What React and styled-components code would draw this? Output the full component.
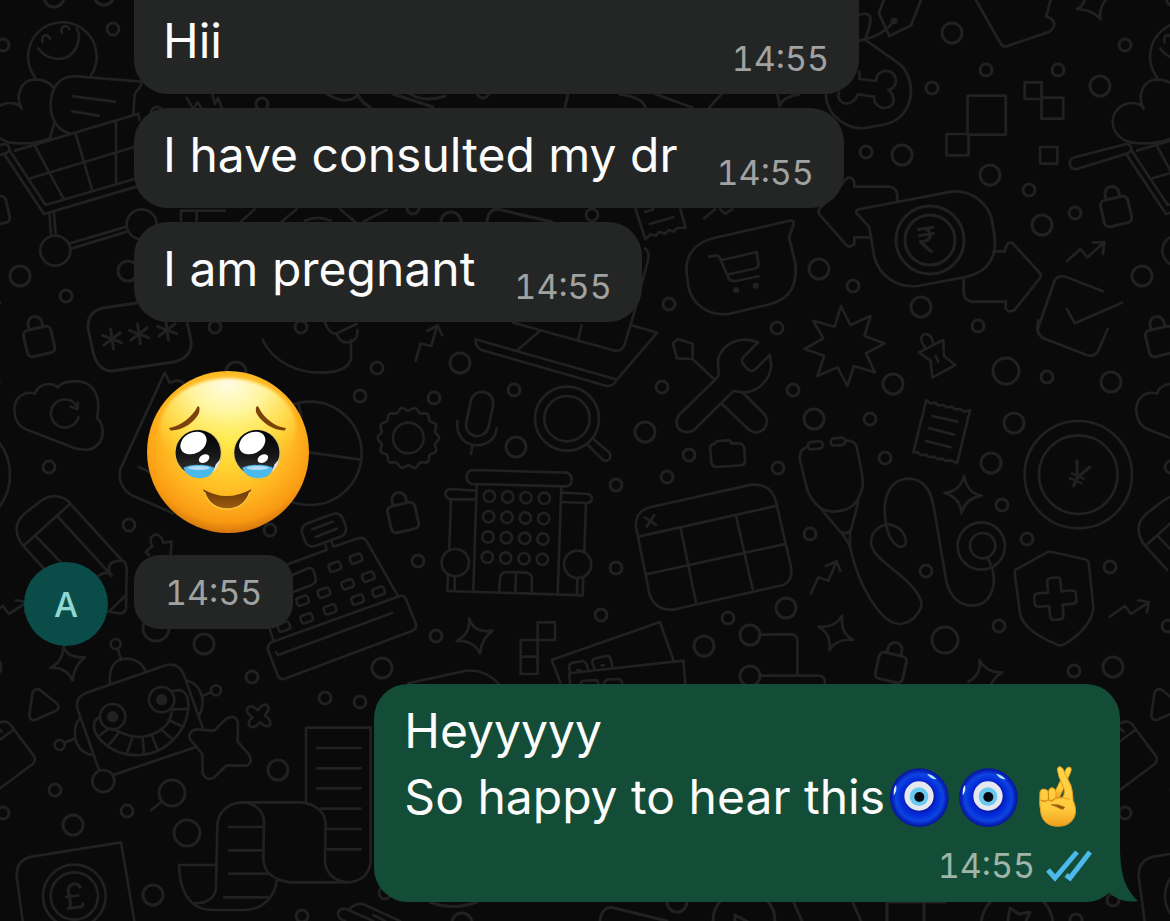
import React from 'react';
import styled, { createGlobalStyle } from 'styled-components';

const GlobalStyle = createGlobalStyle`
  * {
    box-sizing: border-box;
  }

  body {
    margin: 0;
    background-color: #0a0a0a;
    font-family: Inter, 'Liberation Sans', sans-serif;
  }
`;

const Page = styled.div`
  position: relative;
  min-height: 100vh;
  overflow: hidden;
`;

const WallpaperSvg = styled.svg`
  position: absolute;
  top: 0;
  left: 0;
  width: 100%;
  height: 100%;
  fill: none;
  stroke: #212121;
  stroke-width: 3;
  stroke-linecap: round;
  stroke-linejoin: round;
`;

const Section = styled.g`
  stroke-width: 8;
`;

const Coin = styled.text`
  fill: #212121;
  stroke: none;
  text-anchor: middle;
  font-weight: 400;
  font-size: 36px;
`;

const Dot = styled.circle`
  fill: #212121;
  stroke: none;
`;

const Conversation = styled.main`
  position: relative;
  display: flex;
  flex-direction: column;
  gap: 38px;
  padding: 0 50px 19px 24px;
`;

const ReceivedGroup = styled.section`
  display: flex;
  align-items: flex-end;
  gap: 26px;
`;

const Avatar = styled.div`
  display: flex;
  align-items: center;
  justify-content: center;
  flex: none;
  width: 84px;
  height: 84px;
  border-radius: 50%;
  background-color: #0a4d48;
  color: #90d8d3;
  font-size: 34px;
  font-weight: 500;
`;

const MessageList = styled.div`
  display: flex;
  flex-direction: column;
  align-items: flex-start;
  gap: 14px;
  padding-bottom: 17px;
`;

const Bubble = styled.article`
  position: relative;
  display: flex;
  align-items: flex-end;
  justify-content: space-between;
  gap: 39px;
  padding: 14px 30px 13px 29px;
  border-radius: 34px;
  background-color: #242626;
  color: #fcfcfc;
`;

const ContinuedBubble = styled(Bubble)`
  min-width: 725px;
  padding-top: 8px;
  border-top-left-radius: 0;
  border-top-right-radius: 0;
`;

const TimeBubble = styled(Bubble)`
  padding: 16px 31px 14px;
  border-radius: 26px;
`;

const SentBubble = styled(Bubble)`
  flex-direction: column;
  align-self: flex-end;
  gap: 7px;
  padding: 14px 28px 14px 30px;
  background-color: #144d37;
`;

const Text = styled.p`
  margin: 0;
  padding-bottom: 7px;
  font-size: 48px;
  line-height: 66px;
`;

const Line = styled.span`
  display: flex;
  align-items: center;
`;

const Time = styled.time`
  color: ${(props) => (props.$sent ? '#9fb5aa' : '#a1a2a2')};
  font-size: 34px;
  font-variant-numeric: tabular-nums;
  line-height: 44px;
`;

const Status = styled.div`
  display: flex;
  align-items: center;
  gap: 11px;
`;

const TickIcon = styled.svg`
  width: 46px;
  height: 32px;
  fill: none;
  stroke: #4cb9ea;
  stroke-width: 5;
`;

const TailShape = styled.svg`
  position: absolute;
  right: -18px;
  bottom: 0;
  width: 38px;
  height: 52px;
  fill: #144d37;
`;

const BigEmoji = styled.svg`
  width: 162px;
  height: 162px;
  margin: 35px 13px 8px;
`;

const InlineEmoji = styled.svg`
  flex: none;
  width: 59px;
  height: 62px;
  margin: 0 5px;
`;

const smallDots = [
  [113, 29], [3, 45], [262, 104], [157, 113], [66, 296], [215, 327], [301, 327],
  [377, 368], [360, 396], [49, 467], [129, 525], [270, 530], [252, 677], [325, 698],
  [360, 702], [55, 790], [127, 811], [3, 813], [302, 916], [385, 893], [434, 398],
  [514, 390], [616, 485], [616, 568], [667, 477], [689, 455], [662, 387], [777, 328],
  [778, 468], [793, 390], [418, 561], [436, 636], [601, 615], [728, 618], [978, 326],
  [1047, 377], [870, 419], [885, 458], [810, 534], [1002, 505], [1027, 539],
  [926, 571], [1110, 567], [999, 626], [46, 626], [1074, 671], [986, 70], [1058, 70],
  [932, 88], [866, 152], [1029, 190], [1075, 213], [853, 286], [669, 304],
  [1113, 900], [1076, 920], [483, 92], [413, 208], [592, 215],
];

const mediumDots = [
  [54, -3], [104, -5], [20, 276], [128, 271], [236, 372], [204, 644], [382, 668],
  [278, 770], [73, 825], [153, 895], [460, 363], [516, 447], [645, 432], [704, 646],
  [750, 635], [750, 676], [786, 608], [893, 384], [1111, 382], [814, 419],
  [1014, 423], [991, 463], [1113, 667], [952, 33], [1100, 86], [902, 155],
  [990, 175], [1042, 225], [819, 269], [921, 307], [451, 222], [462, 923], [677, 902],
];

const largeDots = [[156, 628], [172, 793], [187, 833], [1006, 371], [945, 640]];

const registerKeys = [
  [1005, 680], [1068, 656], [908, 782], [972, 758], [1043, 733], [1105, 710],
  [852, 860], [920, 835], [990, 808], [1073, 779], [1136, 755],
];

const gearPath = () => {
  const points = [];
  for (let i = 0; i < 224; i += 1) {
    const angle = (i / 224) * Math.PI * 2;
    const r = 87 + 5 * Math.cos(angle * 14);
    points.push(`${(115 + r * Math.cos(angle)).toFixed(1)} ${(384 + r * Math.sin(angle)).toFixed(1)}`);
  }
  return `M${points.join('L')}Z`;
};

const windows = [0, 1, 2, 3].flatMap((row) =>
  [0, 1, 2, 3].map((col) => [358 + col * 55 - row * 2, 559 + col * 2 + row * 61])
);

function Dots({ points, r }) {
  return points.map(([x, y]) => <circle key={`${x}-${y}`} cx={x} cy={y} r={r} />);
}

function Lock({ x, y, angle }) {
  return (
    <g transform={`translate(${x} ${y}) rotate(${angle})`}>
      <rect x="-14" y="-13" width="28" height="27" rx="5" />
      <path d="M-7 -13V-18a7 7 0 0 1 14 0V-13" />
    </g>
  );
}

function Asterisk({ x, y }) {
  return (
    <path
      transform={`translate(${x} ${y}) rotate(-8)`}
      d="M0 -10V10M-9 -5L9 5M-9 5L9 -5"
    />
  );
}

function Groceries() {
  return (
    <Section transform="scale(.3333)">
      <path d="M105 232A103 103 0 1 1 272 228M128 127C122 105 142 98 150 116M186 99C178 78 202 70 208 88" />
      <path d="M115 145C135 180 205 195 230 140C240 115 238 98 230 87" />
      <path d="M162 266C155 252 135 238 105 238C60 240 45 290 65 327C50 295 -25 305 -28 365C-28 400 0 420 25 427C70 434 110 430 146 416M162 372L150 414" />
      <path d="M425 245L230 229C180 225 155 260 152 310C150 365 180 395 213 401M425 245C428 258 412 268 404 283L400 345M220 289L345 305M217 334L296 347" />
      <path d="M-142 472L10 433C32 430 34 455 14 461L-135 507C-160 512 -165 478 -142 472Z" />
      <path d="M45 452L415 341L418 360M28 450L137 615L410 535M15 466L132 642L410 560" />
      <path d="M104 436L190 595M227 402L277 572M348 365V548M92 535L405 440" />
      <path d="M148 640L153 705M162 640L167 703M210 730L380 680M213 746L382 695" />
      <circle cx="166" cy="752" r="45" />
      <circle cx="425" cy="673" r="45" />
      <path d="M560 294L577 322M583 322L592 307L603 322M637 284L645 312L654 294L665 322" />
      <path d="M543 662V632H675M590 632V662M722 665L764 628M845 665L890 628M1020 628L1065 665M1090 665L1160 630M915 662Q953 645 992 662" />
    </Section>
  );
}

function Marketplace() {
  return (
    <Section transform="translate(620) scale(.3507 .3333)">
      <path d="M682 45Q700 35 712 48Q720 65 698 120M682 122L700 118Q750 105 782 63M752 0L738 40L768 108L830 76L858 0" />
      <Dot cx="782" cy="63" r="10" />
      <path d="M700 120L795 190C850 240 840 350 760 372L700 384C650 390 590 350 587 285" />
      <path d="M682 215Q685 230 683 237L730 243C730 215 760 205 778 220C795 240 785 265 765 270C785 285 785 315 765 322C740 330 722 310 725 290L678 283C672 305 650 315 635 308C622 300 620 285 625 278" />
      <path d="M1015 0L1085 130Q1092 143 1105 138L1225 95Q1240 80 1238 70Q1235 55 1215 50L1228 0" />
      <path d="M1325 0Q1318 20 1303 27Q1350 30 1370 58Q1365 25 1385 0" />
      <path d="M991 287H1100V404H991ZM931 402H994V466H931ZM1154 247H1202V297H1154ZM1202 293H1264V356H1202ZM1198 441H1247V491H1198Z" />
      <path d="M790 600Q795 562 765 560H668Q670 530 650 533Q640 540 635 550L570 625Q563 635 570 645L645 735Q655 745 668 733V712H710" />
      <path d="M1070 754H1098Q1100 725 1118 728L1198 820Q1202 828 1197 835L1125 930Q1105 940 1100 925V905H1010Q980 905 980 875V835" />
      <path d="M710 680L675 640Q670 632 682 628L945 575C1000 568 1055 610 1062 670L1068 710C1075 770 1050 815 990 830L850 858C790 865 740 830 725 770L712 690Z" />
      <path d="M495 672L482 712L500 790C505 850 490 895 430 912L310 942C250 950 205 910 195 860L190 820C185 770 210 730 265 715L480 663Q497 658 495 672Z" />
      <path d="M254 770L275 766Q282 767 285 775L310 835Q315 845 330 843L395 829M288 781L390 756L395 795Q394 805 380 807L312 822" />
      <Dot cx="331" cy="870" r="9" />
      <Dot cx="387" cy="857" r="9" />
      <path d="M1275 783L1313 747L1333 772L1380 728M1348 727H1381L1377 762" />
      <path d="M1190 990L1240 840Q1250 825 1270 830L1377 874M1275 928L1297 970L1432 908" />
      <path d="M45 628L72 718L88 703L102 708L112 696L128 701L140 690L152 695L164 684L187 683L172 628M72 636L95 628M85 672L152 652" />
      <path d="M240 655L272 628M285 628L300 641L320 628M0 284Q60 290 72 320M100 282L205 322M290 282L255 322M449 284L455 318Q465 290 510 284" />
    </Section>
  );
}

function Office() {
  return (
    <Section transform="translate(0 340) scale(.3333)">
      <path d="M78 268C35 250 35 185 60 170C75 155 95 158 105 161C115 130 155 125 173 142C190 120 235 120 260 130C295 150 300 190 291 235C310 250 315 290 295 312C275 335 250 330 225 325Z" />
      <path d="M235 232A42 42 0 1 1 228 195M234 188L232 207L212 200" />
      <path d="M550 128Q535 118 520 125L508 127L494 98L362 385C350 425 375 455 400 468L520 520M417 381L450 397" />
      <circle cx="930" cy="340" r="155" />
      <path d="M895 190L905 230M930 338L1083 359" />
      <path d="M788 0C820 70 900 98 960 98C1020 98 1060 80 1053 40V0M1010 -20Q1020 15 1055 5Q1075 -5 1072 -30M975 -52Q990 -15 1010 -20L1070 -48" />
      <path d="M135 690L70 618C40 580 45 545 75 520L120 485C150 460 190 465 210 490L365 660Q380 665 380 690L378 805Q375 822 355 820L325 815" />
      <path d="M70 618L210 492M170 526L335 707M107 588L200 685M335 707C320 685 325 660 365 663M335 707C315 690 300 705 292 710M330 812L378 765" />
      <path d="M457 620C440 590 470 570 485 595L490 608L515 605L512 645M457 617L437 637L447 645" />
      <rect x="-65" y="-36" width="130" height="72" rx="24" transform="translate(972 570) rotate(-20)" />
      <path d="M937 568L998 545M948 590L1010 566M975 608L980 630L865 672M993 600L1000 620L1075 595Q1092 590 1102 607L1195 770" />
      <path d="M877 705L925 685Q940 682 943 700L947 715Q950 728 935 735L877 757M810 870L822 905" />
      {registerKeys.map(([x, y]) => (
        <rect
          key={x}
          x="-18"
          y="-12"
          width="36"
          height="24"
          rx="8"
          transform={`translate(${x} ${y}) rotate(-20)`}
        />
      ))}
      <path d="M804 930Q801 915 816 906L1200 768Q1212 765 1218 777L1248 852Q1251 867 1236 873L852 1017Q840 1020 834 1008Z" />
      <path d="M828 936Q831 948 843 942L1176 819" />
    </Section>
  );
}

function Playroom() {
  return (
    <Section transform="translate(0 630) scale(.3333)">
      <path d="M297 420L232 235Q225 205 255 190L500 105Q535 98 550 130L610 298M340 435L590 350" />
      <circle cx="310" cy="453" r="33" />
      <path d="M240 265C215 290 215 360 275 375M220 328L193 338M563 152C605 165 620 215 597 258M607 198L633 187" />
      <path d="M330 162C325 110 345 87 380 86C415 88 430 105 438 127M353 55L363 88" />
      <circle cx="179" cy="345" r="15" />
      <circle cx="648" cy="181" r="15" />
      <circle cx="347" cy="42" r="15" />
      <circle cx="338" cy="260" r="38" />
      <circle cx="485" cy="209" r="38" />
      <Dot cx="338" cy="260" r="17" />
      <Dot cx="485" cy="209" r="17" />
      <path d="M300 260C275 270 278 300 295 322C330 365 380 378 420 375C500 370 565 300 565 225C565 185 545 175 520 183" />
      <path d="M325 296C355 297 375 322 420 321C480 315 514 280 514 245" />
      <path d="M323 298L297 318M355 310L328 343M397 322L382 368M428 325L432 370M455 315L472 357M482 297L520 330M505 270L550 290M515 238L565 237" />
      <path d="M643 302L678 267Q705 250 714 278L713 335L748 375Q760 400 738 407L680 406L643 442Q618 455 608 430L607 372L572 330Q560 310 585 298Z" />
      <path d="M773 241L785 228Q803 217 807 237L795 257Q818 272 808 287Q795 292 780 277Q760 300 748 287Q742 275 758 262Q735 248 743 233Q756 222 773 241Z" />
      <path d="M190 47Q200 85 255 82Q222 105 218 152Q200 110 150 114Q190 95 190 47Z" />
      <path d="M97 190Q103 172 120 180L170 220Q183 232 168 242L105 270Q88 272 88 255Z" />
      <path d="M-20 290Q15 262 32 285L103 380Q108 392 98 402L-20 490M-10 336L40 300M-5 295L5 305" />
      <path d="M486 514L453 541" />
      <path d="M68 873L50 740Q48 690 95 680L363 637L403 873" />
      <circle cx="223" cy="798" r="94" />
      <circle cx="223" cy="798" r="71" />
      <path d="M918 515V293H1112V695C1108 735 1080 757 1040 757H870C820 750 790 725 790 685L792 575C792 545 765 517 725 517H900C950 520 980 550 977 590L975 690C975 725 1000 755 1045 757" />
      <path d="M725 517C680 520 652 550 652 590L648 770C648 800 625 820 585 820M648 705H537C538 770 560 840 640 840H735C790 838 825 800 830 752" />
      <path d="M952 354H1082M952 415H1082M952 475H1082M960 536H1082M980 597H1082M980 658H1082M688 591H790M688 661H790M688 731H805M672 802H803" />
      <path d="M1035 873Q1010 865 1015 845Q1025 830 1045 840L1120 873M1050 835Q1075 815 1095 825L1200 873M1120 855L1155 873" />
    </Section>
  );
}

function Clinic() {
  return (
    <Section transform="translate(370 310) scale(.3333)">
      <path d="M137 152L152 101L184 108L201 47M172 63L202 46L217 76" />
      <path d="M317 88L735 207M317 88Q315 110 335 120L710 228Q730 230 740 210L862 68L782 45" />
      <path d="M430 38L735 122Q757 125 765 100L795 0L834 -150Q840 -175 825 -185M510 62L443 120M635 45L625 88" />
      <path d={gearPath()} />
      <circle cx="115" cy="384" r="46" />
      <rect x="-34" y="-67" width="68" height="134" rx="34" transform="translate(329 312) rotate(12)" />
      <path d="M262 333C258 380 285 405 320 406C360 405 378 380 380 355M307 408L303 432" />
      <circle cx="591" cy="326" r="96" />
      <circle cx="591" cy="326" r="68" />
      <path d="M652 403L697 448Q710 458 719 447Q725 435 715 425L670 387" />
      <path d="M310 480L588 488Q606 492 605 512Q603 530 585 529L306 522Q290 518 290 500Q293 480 310 480Z" />
      <path d="M320 525L310 840M574 533L563 850M320 542L240 537Q225 540 226 552Q228 566 243 568H316M243 570L238 716" />
      <path d="M234 793L232 843L638 856L640 803M254 800V838M622 803L621 852" />
      <path d="M576 548L655 552Q667 558 666 568Q662 579 650 579L576 576M648 580L643 722" />
      <circle cx="256" cy="758" r="41" />
      <circle cx="623" cy="763" r="41" />
      <path d="M387 845L390 805Q392 787 408 786L468 788Q485 790 486 806L485 848M438 788L436 847" />
      <Dots points={windows} r={17} />
      <path d="M1033 212L927 315Q912 340 928 358Q948 375 972 360L1088 245Q1095 242 1105 245C1150 255 1200 220 1204 165L1199 135L1156 178Q1145 188 1133 178L1118 160Q1112 150 1122 140L1164 97C1110 75 1060 100 1045 145C1042 165 1048 185 1045 198Z" />
      <path d="M1033 208L968 148M921 145L909 100L923 87L968 101V147ZM1057 283L1135 358Q1160 378 1182 357Q1200 335 1183 312L1120 250" />
      <path d="M1033 402Q1020 402 1021 418L1024 458Q1028 472 1040 471L1112 466Q1126 464 1125 450L1123 415Q1120 400 1108 400H1083Q1085 391 1075 391L1045 393Q1035 395 1033 402Z" />
      <path d="M798 650Q795 605 840 592L1145 524Q1205 520 1218 575L1262 765Q1272 810 1240 825L915 898Q855 905 838 850Z" />
      <path d="M805 680L1222 587M830 793L1245 702M932 655L978 877M1098 617L1148 838M824 622L858 645M853 616L830 650" />
      <path d="M298 925Q310 970 368 962Q335 985 330 1030Q310 990 260 993Q300 975 298 925Z" />
      <path d="M503 937H555V990H503ZM452 990H503V1040H452ZM452 1040H503V1092H452Z" />
      <path d="M572 1120L545 1050L870 936L910 1050M600 1120L598 1090L940 1052L946 1120" />
      <path d="M600 1085L597 1070Q598 1060 610 1058L640 1053Q650 1055 655 1082" />
      <path d="M674 1078L667 1060Q665 1048 677 1045L707 1038Q720 1037 722 1048L728 1073" />
      <path d="M632 1120Q635 1110 650 1112L675 1110Q685 1112 685 1120M702 1120Q705 1108 720 1108L745 1107Q756 1110 757 1120M694 1066H702M622 1080H630" />
      <path d="M115 1120L290 1082Q345 1078 385 1120M1168 974H1202M1168 1097H1202" />
    </Section>
  );
}

function Pharmacy() {
  return (
    <Section transform="translate(770 320) scale(.3333)">
      <path d="M213 -42L241 15L302 -12L283 48L343 70L288 100L315 157L252 138L232 198L203 142L142 168L163 107L103 87L160 55L129 2L194 20Z" />
      <path d="M520 60L522 108L556 135L487 173L482 122L447 97ZM465 82C445 55 455 42 470 42C485 45 488 60 490 70M497 108L505 125" />
      <path d="M805 0Q795 40 820 55L950 105Q975 112 985 92L1013 27" />
      <path d="M469 240L480 250L495 248L505 256L520 255L530 262L545 260L555 268L570 267L583 275L600 271L561 430L542 421L527 423L517 416L502 417L492 410L477 411L467 404L452 405L442 396L430 397Z" />
      <path d="M487 288L562 305M478 325L552 344M468 363L542 382" />
      <path d="M112 380Q85 390 90 420L108 495C118 540 150 575 190 575C240 573 265 555 278 500C282 470 265 410 260 380Q252 360 228 362" />
      <rect x="-22" y="-11" width="44" height="22" rx="10" transform="translate(136 376) rotate(-6)" />
      <rect x="-22" y="-11" width="44" height="22" rx="10" transform="translate(204 365) rotate(-6)" />
      <path d="M152 565L215 640Q240 670 245 700C265 790 330 912 390 912C435 908 465 860 450 835C420 765 300 720 303 665C305 630 335 612 360 614C395 620 415 655 405 675C385 695 355 660 348 610C335 540 355 476 418 476C465 478 485 520 492 565L530 790C545 840 575 857 610 857C660 855 680 800 668 750Q660 725 650 712" />
      <path d="M265 545L243 630Q235 643 215 638M240 630V685" />
      <circle cx="634" cy="678" r="71" />
      <circle cx="638" cy="677" r="38" />
      <path d="M583 467Q590 520 635 527Q585 535 575 580Q570 530 523 519Q570 515 583 467Z" />
      <circle cx="925" cy="464" r="161" />
      <circle cx="925" cy="464" r="118" />
      <path d="M735 750L830 698Q840 693 850 697L945 718Q957 722 957 735L970 860C972 900 930 945 885 972Q873 980 860 973C800 950 755 915 750 880L735 765Z" />
      <path
        transform="translate(856 836) rotate(-5)"
        d="M-20 -50Q-20 -63 -8 -63H8Q20 -63 20 -50V-20H50Q63 -20 63 -8V8Q63 20 50 20H20V50Q20 63 8 63H-8Q-20 63 -20 50V20H-50Q-63 20 -63 8V-8Q-63 -20 -50 -20H-20Z"
      />
      <path d="M1020 890L1065 858L1083 882L1135 848M1104 841L1137 846L1131 877M122 822L145 772L175 782L200 724M168 738L200 724L211 753" />
      <path d="M217 887Q210 940 250 960Q200 955 178 990Q185 940 145 920Q195 925 217 887ZM665 1090Q675 1070 697 1057Q650 1060 628 1020Q635 1065 595 1085" />
      <path d="M0 943H65Q82 945 82 960V1065M0 1067H150Q165 1070 165 1090" />
    </Section>
  );
}

function Wallpaper() {
  return (
    <WallpaperSvg viewBox="0 0 1170 921" preserveAspectRatio="xMidYMin slice" aria-hidden="true">
      <g id="doodles">
        <Dots points={smallDots} r={6} />
        <Dots points={mediumDots} r={10} />
        <Dots points={largeDots} r={13} />
        <Groceries />
        <Marketplace />
        <Office />
        <Playroom />
        <Clinic />
        <Pharmacy />
        <Lock x={1116} y={211} angle={-13} />
        <Lock x={39} y={341} angle={-13} />
        <Lock x={403} y={517} angle={-13} />
        <Lock x={891} y={667} angle={13} />
        <path d="M137 303L103 308Q87 312 88 328L92 347Q96 371 112 371L174 362Q193 357 191 340L187 322" />
        <Asterisk x={112} y={339} />
        <Asterisk x={139} y={334} />
        <Asterisk x={167} y={330} />
        <circle cx="930" cy="240" r="34" />
        <circle cx="930" cy="240" r="25" />
        <Coin transform="translate(929 253) rotate(-8)">₹</Coin>
        <Coin transform="translate(1073 487) rotate(24)">¥</Coin>
        <Coin transform="translate(76 909) rotate(-8)">£</Coin>
        <path d="M327 94Q347 106 358 95Q362 103 370 107M393 94L433 107M410 94Q425 103 445 96M568 94L565 107" />
        <path d="M487 222Q488 210 497 209L552 222M430 902Q452 911 477 902M600 921Q602 905 614 908L667 921" />
        <circle cx="744" cy="921" r="31" />
        <path d="M735 930V915L750 923M794 903L802 921M853 903L861 921M887 921V902H945M924 902V921" />
        <circle cx="1017" cy="926" r="36" />
        <path d="M1008 921L1010 908L1019 914L1030 912L1026 921" />
      </g>
      <use href="#doodles" x="1122" />
      <use href="#doodles" x="-1122" />
    </WallpaperSvg>
  );
}

function HoldingTears() {
  return (
    <BigEmoji viewBox="51 61 488 488" role="img" aria-label="🥹">
      <defs>
        <radialGradient id="face" cx=".5" cy=".38" r=".64">
          <stop offset="0" stopColor="#ffe63c" />
          <stop offset=".35" stopColor="#ffd233" />
          <stop offset=".65" stopColor="#ffb41f" />
          <stop offset=".86" stopColor="#f99a12" />
          <stop offset="1" stopColor="#c96c0c" />
        </radialGradient>
        <radialGradient id="shine" cx=".5" cy=".06" r=".82">
          <stop offset="0" stopColor="#fffce6" />
          <stop offset=".35" stopColor="#fff9a8" stopOpacity=".9" />
          <stop offset=".75" stopColor="#fff05a" stopOpacity=".4" />
          <stop offset="1" stopColor="#ffe43c" stopOpacity="0" />
        </radialGradient>
        <linearGradient id="pupil" x1="0" y1="0" x2="0" y2="1">
          <stop offset="0" stopColor="#000000" />
          <stop offset=".6" stopColor="#191919" />
          <stop offset="1" stopColor="#3a3a3a" />
        </linearGradient>
        <linearGradient id="mouth" x1="0" y1="0" x2="0" y2="1">
          <stop offset="0" stopColor="#6a3906" />
          <stop offset="1" stopColor="#9c5c10" />
        </linearGradient>
        <filter id="soften" x="-10%" y="-10%" width="120%" height="120%">
          <feGaussianBlur stdDeviation="5" />
        </filter>
      </defs>
      <circle cx="295" cy="305" r="244" fill="url(#face)" />
      <ellipse cx="295" cy="235" rx="205" ry="152" fill="url(#shine)" filter="url(#soften)" />
      <path d="M117 233C150 228 190 198 203 168Q212 164 208 187C195 217 155 242 122 240Z" fill="#7b420b" />
      <path d="M470 233C438 230 402 203 386 168Q376 164 380 187C395 217 435 242 466 240Z" fill="#7b420b" />
      {[206, 383].map((x) => (
        <g key={x} transform={`translate(${x} 308)`}>
          <circle r="71" fill="#d9c36e" />
          <circle cx="-1" cy="-1" r="68" fill="url(#pupil)" />
          <path d="M66 18Q60 45 44 57L52 35Z" fill="#dfe5ea" />
          <ellipse cx="-15" cy="-30" rx="42" ry="31" transform="rotate(-30 -15 -30)" fill="#ffffff" />
          <ellipse cx="17" cy="17" rx="17" ry="12" transform="rotate(-30 17 17)" fill="#ffffff" />
          <path d="M-45 44Q-22 34 0 36Q24 34 47 44Q42 76 2 76Q-36 76 -45 44Z" fill="#4bb9ec" />
          <ellipse cx="1" cy="45" rx="33" ry="6" fill="#b4dcf7" />
        </g>
      ))}
      <path d="M220 417Q290 458 365 417Q350 475 292 475Q236 473 220 417Z" fill="url(#mouth)" />
      <path d="M224 425Q240 475 292 477Q345 475 361 425" fill="none" stroke="#ffd04a" strokeWidth="4" />
    </BigEmoji>
  );
}

function Nazar() {
  return (
    <InlineEmoji viewBox="30 28 177 186" role="img" aria-label="🧿">
      <defs>
        <radialGradient id="glass">
          <stop offset="0" stopColor="#0b2bd0" />
          <stop offset=".6" stopColor="#0428d6" />
          <stop offset=".8" stopColor="#0c45e2" />
          <stop offset=".92" stopColor="#0822b8" />
          <stop offset="1" stopColor="#071595" />
        </radialGradient>
      </defs>
      <circle cx="118" cy="123" r="88" fill="url(#glass)" />
      <circle cx="119" cy="121" r="48" fill="#071fb0" />
      <circle cx="117" cy="118" r="44" fill="#e6e8f0" />
      <circle cx="117" cy="120" r="28" fill="#69c9ee" />
      <circle cx="118" cy="121" r="15" fill="#070b10" />
      <path d="M141 51Q160 55 170 68Q153 69 141 51Z" fill="#b5e9fa" />
      <path d="M43 110Q42 97 47 90Q49 101 43 110Z" fill="#dff2ff" stroke="#dff2ff" strokeWidth="4" />
    </InlineEmoji>
  );
}

function CrossedFingers() {
  return (
    <InlineEmoji viewBox="442 30 177 189" role="img" aria-label="🤞">
      <defs>
        <linearGradient id="skin" x1="0" y1="0" x2="0" y2="1">
          <stop offset="0" stopColor="#ffd548" />
          <stop offset=".7" stopColor="#ffcb3d" />
          <stop offset="1" stopColor="#f09f1c" />
        </linearGradient>
      </defs>
      <g fill="url(#skin)" stroke="#e29a1e" strokeWidth="3" strokeLinejoin="round">
        <path d="M555 42Q560 30 570 34Q575 40 570 50L535 130L515 125Z" />
        <path d="M530 42Q530 30 541 33Q548 36 551 48L571 88Q577 105 578 135Q590 160 583 183Q570 214 532 214Q492 214 481 180Q474 150 477 110Q480 98 493 101Q502 103 503 112Q503 96 515 96Q526 98 526 112L525 128L545 126Q553 118 551 102L535 62Z" />
      </g>
      <path d="M503 110V132Q495 142 480 134M503 132Q512 142 523 128" fill="none" stroke="#d98a1a" strokeWidth="4" />
      <path d="M508 136Q540 120 568 132" fill="none" stroke="#e0981f" strokeWidth="3" />
      <path d="M512 148Q535 145 552 156Q550 164 541 161Q528 153 512 148Z" fill="#8f520c" stroke="#b8701a" strokeWidth="3" />
    </InlineEmoji>
  );
}

function ReadTicks() {
  return (
    <TickIcon viewBox="0 0 46 32" role="img" aria-label="✓✓">
      <path d="M2 20L9 28L31 2M20 25L24 28L44 2" />
    </TickIcon>
  );
}

function Tail() {
  return (
    <TailShape viewBox="0 0 38 52" aria-hidden="true">
      <path d="M20 0C21 30 27 40 38 51C26 53 16 49 8 42L0 20V0Z" />
    </TailShape>
  );
}

function App() {
  return (
    <Page>
      <GlobalStyle />
      <Wallpaper />
      <Conversation>
        <ReceivedGroup>
          <Avatar>A</Avatar>
          <MessageList>
            <ContinuedBubble>
              <Text>Hii</Text>
              <Time>14:55</Time>
            </ContinuedBubble>
            <Bubble>
              <Text>I have consulted my dr</Text>
              <Time>14:55</Time>
            </Bubble>
            <Bubble>
              <Text>I am pregnant</Text>
              <Time>14:55</Time>
            </Bubble>
            <HoldingTears />
            <TimeBubble>
              <Time>14:55</Time>
            </TimeBubble>
          </MessageList>
        </ReceivedGroup>
        <SentBubble>
          <Text>
            <Line>Heyyyyy</Line>
            <Line>
              So happy to hear this
              <Nazar />
              <Nazar />
              <CrossedFingers />
            </Line>
          </Text>
          <Status>
            <Time $sent>14:55</Time>
            <ReadTicks />
          </Status>
          <Tail />
        </SentBubble>
      </Conversation>
    </Page>
  );
}

export default App;
